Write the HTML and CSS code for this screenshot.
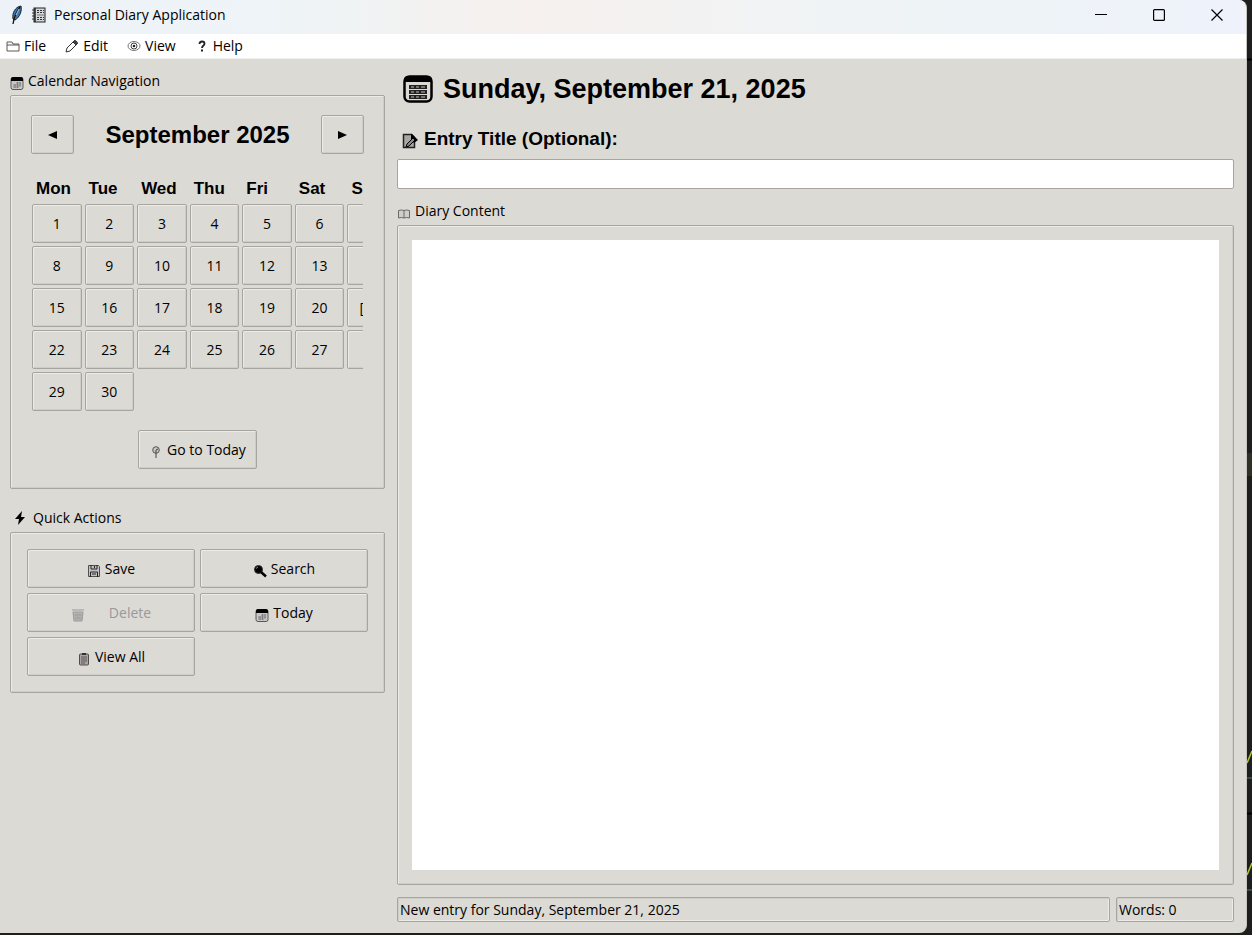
FILE: index.html
```html
<!DOCTYPE html>
<html lang="en">
<head>
<meta charset="utf-8">
<title>Personal Diary Application</title>
<link rel="stylesheet" href="styles.css">
</head>
<body>
<svg class="sprite" aria-hidden="true">
  <symbol id="cal" viewBox="0 0 14 14"><rect x="1" y="1.5" width="12" height="12" rx="2" fill="#c9c7c6" stroke="#5c5658"/><path d="M1 5V3q0-2 2-2h8q2 0 2 2v2z" fill="#000"/><path d="M6 7h5M3 9h8M3 11h6M5 8v4M7.500 6v6M10 6v5" stroke="#77747a" stroke-width=".8"/></symbol>
</svg>
<div class="window">
  <header class="titlebar">
    <svg class="feather" viewBox="0 0 14 20"><path d="M3 14C2 8 5 2 11 1c1 5-1 11-6 14z" fill="#3f78b5" stroke="#17202b"/><path d="M10 2C6 7 4 12 3 19" fill="none" stroke="#151515" stroke-width="1.300"/><path d="M9 4 6 10" stroke="#a9d1f1"/></svg>
    <svg class="notebook" viewBox="0 0 14 16"><rect x="2" y="1" width="11" height="14" fill="#d5d7da" stroke="#222"/><path d="M3 1v14" stroke="#222" stroke-width="1.500"/><path d="M5 3.500h7M5 5.500h7M5 10.500h7M5 12.500h7" stroke="#333" stroke-dasharray="2 1"/><path d="M5 8h7" stroke="#777"/><path d="M0 3h3M0 6h3M0 9h3M0 12h3" stroke="#333"/></svg>
    <h1 class="title">Personal Diary Application</h1>
    <div class="controls">
      <button class="ctl" aria-label="Minimize"><svg viewBox="0 0 12 12"><path d="M0 5.500h12" stroke="#000"/></svg></button>
      <button class="ctl" aria-label="Maximize"><svg viewBox="0 0 12 12"><rect x=".6" y=".6" width="10.800" height="10.800" rx="1" fill="none" stroke="#000" stroke-width="1.200"/></svg></button>
      <button class="ctl" aria-label="Close"><svg viewBox="0 0 12 12"><path d="m.5.500 11 11m0-11-11 11" stroke="#000" stroke-width="1.200"/></svg></button>
    </div>
  </header>
  <nav class="menubar">
    <button class="menu"><svg class="ic" viewBox="0 0 14 14"><path d="M1 12V3h5l1 2h6v7zM1 6h12" fill="none" stroke="#5d5652"/></svg>File</button>
    <button class="menu"><svg class="ic" viewBox="0 0 14 14"><path d="m1 13 1-4 7-7q1-1 2 0l1 1q1 1 0 2l-7 7zM8 3l3 3" fill="none" stroke="#333"/><path d="m9 2 3 3" stroke="#333" stroke-width="2"/></svg>Edit</button>
    <button class="menu"><svg class="ic" viewBox="0 0 14 14"><ellipse cx="7" cy="7" rx="6" ry="4.500" fill="none" stroke="#777"/><circle cx="7" cy="7" r="3" fill="none" stroke="#444"/><circle cx="7" cy="7" r="1.300" fill="#222"/></svg>View</button>
    <button class="menu help"><svg class="ic" viewBox="0 0 14 14"><path d="M4.500 5q0-2.500 2.500-2.500T9.500 4.800C9.500 6.500 7 6.500 7 9" fill="none" stroke="#222" stroke-width="1.800"/><path d="M6 10.500h2v2H6z" fill="#222"/></svg>Help</button>
  </nav>
  <div class="content">
    <aside class="side">
      <section class="group">
        <h2 class="label"><svg class="ic low"><use href="#cal"/></svg>Calendar Navigation</h2>
        <div class="panel calendar">
          <div class="month">
            <button class="btn arrow" aria-label="Previous month"><svg viewBox="0 0 10 10"><path d="M0 5 9 1v8z"/></svg></button>
            <h3 class="month-name">September 2025</h3>
            <button class="btn arrow" aria-label="Next month"><svg viewBox="0 0 10 10"><path d="M10 5 1 1v8z"/></svg></button>
          </div>
          <div class="clip">
            <table class="days">
              <thead><tr><th>Mon</th><th>Tue</th><th>Wed</th><th>Thu</th><th>Fri</th><th>Sat</th><th>Sun</th></tr></thead>
              <tbody>
                <tr><td><button class="btn day">1</button></td><td><button class="btn day">2</button></td><td><button class="btn day">3</button></td><td><button class="btn day">4</button></td><td><button class="btn day">5</button></td><td><button class="btn day">6</button></td><td><button class="btn day">7</button></td></tr>
                <tr><td><button class="btn day">8</button></td><td><button class="btn day">9</button></td><td><button class="btn day">10</button></td><td><button class="btn day">11</button></td><td><button class="btn day">12</button></td><td><button class="btn day">13</button></td><td><button class="btn day">14</button></td></tr>
                <tr><td><button class="btn day">15</button></td><td><button class="btn day">16</button></td><td><button class="btn day">17</button></td><td><button class="btn day">18</button></td><td><button class="btn day">19</button></td><td><button class="btn day">20</button></td><td><button class="btn day">[21]</button></td></tr>
                <tr><td><button class="btn day">22</button></td><td><button class="btn day">23</button></td><td><button class="btn day">24</button></td><td><button class="btn day">25</button></td><td><button class="btn day">26</button></td><td><button class="btn day">27</button></td><td><button class="btn day">28</button></td></tr>
                <tr><td><button class="btn day">29</button></td><td><button class="btn day">30</button></td></tr>
              </tbody>
            </table>
          </div>
          <button class="btn goto"><svg class="ic low" viewBox="0 0 14 14"><circle cx="7" cy="5" r="3.300" fill="#c9c7c2" stroke="#555"/><path d="M7 5v8M7 5l2-1" stroke="#444" fill="none"/></svg>Go to Today</button>
        </div>
      </section>
      <section class="group">
        <h2 class="label quick"><svg class="ic" viewBox="0 0 14 14"><path d="M9 0 2 8h4l-1 6 7-8H8z"/></svg>Quick Actions</h2>
        <div class="panel actions">
          <button class="btn"><svg class="ic low" viewBox="0 0 14 14"><path d="M1.500 1.500h10l1 1v10h-11z" fill="#c5c1c2" stroke="#554d50"/><path d="M4 1v4h6V1M7.500 2v2M3.500 13V8h7v5M5 10h4" fill="none" stroke="#222"/></svg>Save</button>
          <button class="btn"><svg class="ic low" viewBox="0 0 14 14"><circle cx="5.500" cy="5.500" r="4" fill="#000" stroke="#333"/><path d="m8 8 5 4.500" stroke="#000" stroke-width="2.500"/><path d="M3 4.500 5 3" stroke="#888"/></svg>Search</button>
          <button class="btn delete" disabled><svg class="ic low" viewBox="0 0 14 14"><path d="M1 2h12M2 4h10l-1 9H3z" fill="#bbb" stroke="#999"/><path d="M5 5v7M7 5v7M9 5v7M3 7h8M3 10h8" stroke="#999" stroke-width=".7"/></svg>Delete</button>
          <button class="btn"><svg class="ic low"><use href="#cal"/></svg>Today</button>
          <button class="btn"><svg class="ic low" viewBox="0 0 14 14"><rect x="2.500" y="2" width="9" height="11" rx="1" fill="#aaa5a3" stroke="#514b4a"/><path d="M5 1h4v2H5z" fill="#333"/><path d="M4 5h6M4 7h6M4 9h6M4 11h4" stroke="#444" stroke-width=".8"/></svg>View All</button>
        </div>
      </section>
    </aside>
    <main class="main">
      <h2 class="date"><svg viewBox="0 0 32 30"><rect x="2.500" y="2.500" width="27" height="25" rx="5" fill="#dcdad5" stroke="#000" stroke-width="2.500"/><path d="M2 8V6q0-4 4-4h20q4 0 4 4v2z"/><path d="M7 11h18v4H7zM7 16h18v4H7zM7 21h18v4H7z" fill="#222"/><path d="M9 13h3m2 0h3m2 0h4M9 18h3m2 0h3m2 0h4M9 23h3m2 0h3m2 0h4" stroke="#8e8c88" stroke-width="1.500"/></svg>Sunday, September 21, 2025</h2>
      <label class="entry-label" for="entry"><svg viewBox="0 0 16 16"><path d="M1.500 1.500h8l3 3v10h-11z" fill="#a9a7a3" stroke="#222" stroke-width="1.500"/><path d="M9 1h1l6 6-4 3-3-3z"/><path d="m13 7-6 6-3 1 1-3 6-6z" stroke="#000" fill="#888"/></svg>Entry Title (Optional):</label>
      <input class="entry" id="entry" type="text">
      <label class="label diary-label" for="diary"><svg class="ic low" viewBox="0 0 14 14"><path d="M1.500 4.500q3-1 5.500 0 2.500-1 5.500 0V12q-3-1-5.500 0-2.500-1-5.500 0zM7 4.500V12" fill="#d0cecb" stroke="#6d6866"/></svg>Diary Content</label>
      <div class="panel diary"><textarea class="text" id="diary"></textarea></div>
      <footer class="status">
        <p class="cell grow">New entry for Sunday, September 21, 2025</p>
        <p class="cell words">Words: 0</p>
      </footer>
    </main>
  </div>
</div>
<svg class="behind" viewBox="0 0 5 935" preserveAspectRatio="none" aria-hidden="true"><path d="M0 59.500h5M0 813.500h5" stroke="#000" stroke-width="2"/><path d="M0 453h5v23H0z" fill="#303126"/><path d="m0 763 5-12M0 875l5-12" stroke="#b5c529" stroke-width="1.500"/><path d="M0 778h5M0 890h5" stroke="#467a83"/></svg>
</body>
</html>
```
FILE: styles.css
```css
* { box-sizing: border-box; }
body {
  margin: 0;
  height: 100vh;
  display: flex;
  background: #1e1f1c;
  color: #000;
  font: 14px/20px "Open Sans", "Noto Sans", sans-serif;
}
h1, h2, h3, p { margin: 0; font: inherit; }
button, input, textarea { font: inherit; color: inherit; }
.sprite { position: absolute; width: 0; height: 0; }
.window {
  flex: 1;
  display: flex;
  flex-direction: column;
  margin-bottom: 2px;
  background: #dcdad5;
  border-right: 1px solid #c4c4c1;
  border-radius: 0 8px 8px 0;
  overflow: hidden;
}
.behind { width: 5px; height: 100vh; flex: none; }
.titlebar {
  height: 34px;
  display: flex;
  align-items: center;
  padding: 0 0 4px 10px;
  background: linear-gradient(90deg, #edf2f8, #eef4f7 22%, #f6f1ee 42%, #f2f3f4 60%, #edf3f7 80%, #eff2fb);
}
.feather { width: 14px; height: 20px; margin-right: 8px; }
.notebook { width: 14px; height: 16px; margin-right: 8px; }
.title { flex: 1; }
.controls { display: flex; }
.ctl { width: 58px; height: 30px; padding: 0; border: 0; background: none; display: grid; place-items: center; }
.ctl svg { width: 12px; height: 12px; }
.menubar {
  height: 25px;
  display: flex;
  gap: 19px;
  align-items: center;
  padding: 0 6px;
  background: #fff;
  border-bottom: 1px solid #efefee;
}
.menu { display: flex; align-items: center; gap: 4px; padding: 0; border: 0; background: none; }
.ic { width: 14px; height: 14px; flex: none; }
.low { position: relative; top: 2px; }
.content { flex: 1; display: flex; gap: 12px; padding: 12px 12px 11px 10px; min-height: 0; }
.side { width: 375px; flex: none; }
.group { margin-bottom: 19px; }
.label { display: flex; align-items: center; gap: 4px; height: 20px; }
.group .label { margin-bottom: 4px; }
.group .quick { gap: 6px; padding-left: 3px; }
.panel {
  border: 1px solid #a8a49f;
  border-radius: 2px;
  box-shadow: inset 1px 1px #eeebe7, inset -1px -1px #cfcdc8;
}
.calendar { padding: 19px; display: flex; flex-direction: column; }
.month { display: flex; justify-content: space-between; align-items: center; padding: 0 1px; }
.month-name { font: bold 24px/30px "Liberation Sans", Arial, sans-serif; }
.btn {
  display: flex;
  align-items: center;
  justify-content: center;
  gap: 4px;
  height: 39px;
  padding: 0 10px;
  border: 1px solid #a8a49f;
  border-radius: 2px;
  background: #dcdad5;
  box-shadow: inset 1px 1px #eeebe7, inset -1px -1px #cfcdc8;
}
.btn:disabled { color: #999; }
.arrow { width: 43px; }
.arrow svg { width: 10px; height: 10px; }
.clip { overflow: hidden; margin: 20px 2px 0 -1px; }
.days { width: 371px; table-layout: fixed; border-spacing: 3px; }
.days th { height: 24px; padding: 0 4px; text-align: left; font: bold 17px/24px "Liberation Sans", Arial, sans-serif; }
.days td { padding: 0; }
.day { width: 100%; padding: 0; }
.goto { align-self: center; margin-top: 16px; }
.actions { display: grid; grid-template-columns: 1fr 1fr; gap: 5px; padding: 16px; }
.delete { gap: 24px; }
.main { flex: 1; min-width: 0; display: flex; flex-direction: column; }
.date { display: flex; align-items: center; gap: 9px; padding-left: 5px; font: bold 27px/36px "Liberation Sans", Arial, sans-serif; }
.date svg { width: 32px; height: 30px; }
.entry-label { display: flex; align-items: center; gap: 6px; margin-top: 20px; padding-left: 5px; font: bold 19px/24px "Liberation Sans", Arial, sans-serif; }
.entry-label svg { width: 16px; height: 16px; position: relative; top: 2px; }
.entry { width: 100%; height: 30px; margin-top: 8px; border: 1px solid #a8a49f; border-radius: 2px; background: #fff; }
.diary-label { margin-top: 12px; }
.diary { flex: 1; display: flex; margin-top: 4px; padding: 14px; min-height: 0; }
.text { flex: 1; border: 0; padding: 4px; resize: none; background: #fff; }
.status { display: flex; gap: 6px; margin-top: 12px; }
.cell { height: 25px; padding: 0 2px; line-height: 23px; border: 1px solid #a8a49f; border-radius: 2px; box-shadow: inset 1px 1px #cfcdc8, inset -1px -1px #eeebe7; }
.grow { flex: 1; }
.words { width: 118px; }
```
